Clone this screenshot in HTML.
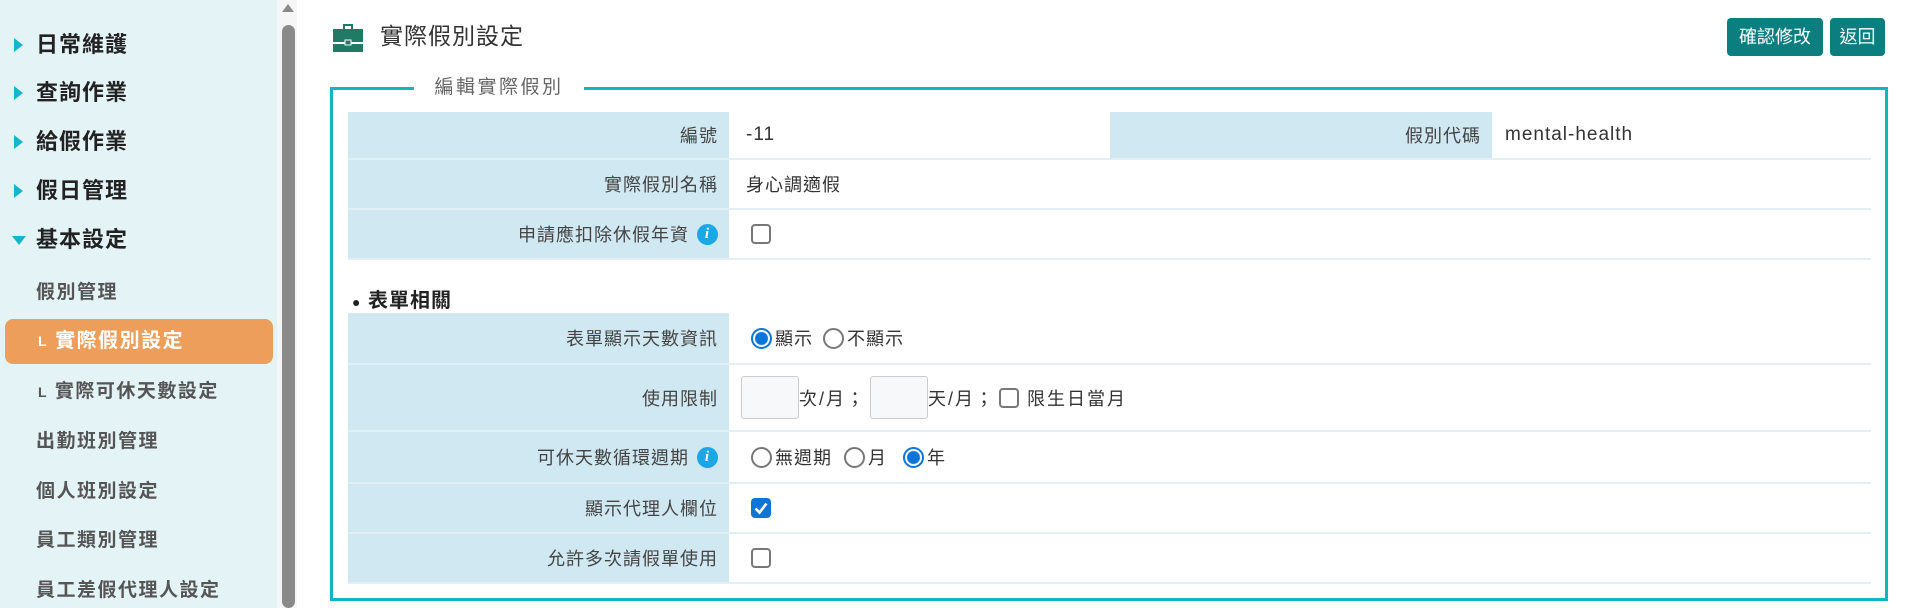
<!DOCTYPE html>
<html><head><meta charset="utf-8"><style>
*{box-sizing:border-box;margin:0;padding:0}
body{width:1910px;height:608px;overflow:hidden;background:#fff;font-family:"Liberation Sans","Noto Sans CJK TC",sans-serif;position:relative;color:#333}
.side{position:absolute;left:0;top:0;width:277px;height:608px;background:#e4f4f6}
.m{position:absolute;left:36px;font-size:22px;font-weight:bold;color:#222;letter-spacing:1px;line-height:24px}
.ar{position:absolute;left:-22px;top:5px;width:0;height:0;border-top:7px solid transparent;border-bottom:7px solid transparent;border-left:9px solid #17b5c9}
.ad{position:absolute;left:-24px;top:8px;border-left:7px solid transparent;border-right:7px solid transparent;border-top:9px solid #17b5c9}
.s{position:absolute;left:36px;font-size:19px;font-weight:bold;color:#555;letter-spacing:1.5px;line-height:22px}
.pill{position:absolute;left:5px;top:319px;width:268px;height:45px;background:#ec9e5a;border-radius:8px}
.track{position:absolute;left:277px;top:0;width:20px;height:608px;background:#f6f6f6}
.thumb{position:absolute;left:282px;top:25px;width:13px;height:583px;background:#8a8a8a;border-radius:7px}
.up{position:absolute;left:282px;top:4px;border-left:6.5px solid transparent;border-right:6.5px solid transparent;border-bottom:8px solid #8a8a8a}
.btn{position:absolute;top:18px;height:38px;background:#0b7f80;color:#fff;font-size:18px;line-height:38px;text-align:center;border-radius:4px}
.fs{position:absolute;left:330px;top:87px;width:1558px;height:514px;border:3px solid #12b5bf}
.lg{position:absolute;left:414px;top:76px;width:170px;height:24px;background:#fff;text-align:center;font-size:19px;color:#666;letter-spacing:2.5px;line-height:24px}
.row{position:absolute;left:348px;width:1523px;border-bottom:2px solid #e3eff4}
.lab{position:absolute;left:0;top:0;bottom:0;width:381px;background:#cfe8f1;text-align:right;padding-right:11px;font-size:18px;color:#444;letter-spacing:1px;display:flex;align-items:center;justify-content:flex-end}
.val{position:absolute;left:395px;top:0;bottom:0;display:flex;align-items:center;font-size:18px;color:#333;letter-spacing:1px}
.cb{display:inline-block;width:20px;height:20px;border:2px solid #777;border-radius:4px;background:#fff;margin-left:8px}
.cbon{display:inline-block;width:20px;height:20px;border-radius:4px;background:#0d74d8;margin-left:8px;position:relative}
.rd{display:inline-block;width:21px;height:21px;border:2px solid #777;border-radius:50%;margin:0 3px 0 8px;background:#fff;vertical-align:middle}
.rdon{display:inline-block;width:21px;height:21px;border:2px solid #0d74d8;border-radius:50%;margin:0 3px 0 8px;background:radial-gradient(circle,#0d74d8 6px,#fff 7px);vertical-align:middle}
.info{display:inline-block;width:21px;height:21px;border-radius:50%;background:#1aa7e6;color:#fff;font-size:15px;font-style:italic;font-weight:bold;line-height:21px;text-align:center;margin-left:8px;font-family:"Liberation Serif",serif}
.inp{display:inline-block;width:58px;height:43px;border:1px solid #ccc;border-radius:3px;background:#f7f8fa}
</style></head><body>
<div class="side"></div>
<div class="m" style="top:33px"><span class="ar"></span>日常維護</div>
<div class="m" style="top:81px"><span class="ar"></span>查詢作業</div>
<div class="m" style="top:130px"><span class="ar"></span>給假作業</div>
<div class="m" style="top:179px"><span class="ar"></span>假日管理</div>
<div class="m" style="top:228px"><span class="ad"></span>基本設定</div>
<div class="s" style="top:282px">假別管理</div>
<div class="pill"></div>
<div class="s" style="top:330px;color:#fff;left:38px;font-size:20px"><span style="font-size:14px;vertical-align:top">L</span> 實際假別設定</div>
<div class="s" style="top:381px;left:38px"><span style="font-size:14px;vertical-align:top">L</span> 實際可休天數設定</div>
<div class="s" style="top:431px">出勤班別管理</div>
<div class="s" style="top:481px">個人班別設定</div>
<div class="s" style="top:530px">員工類別管理</div>
<div class="s" style="top:580px">員工差假代理人設定</div>
<div class="track"></div><div class="thumb"></div><div class="up"></div>

<svg style="position:absolute;left:333px;top:23px" width="30" height="29" viewBox="0 0 30 29"><path d="M10 1h10v5h-2V3h-6v3h-2z" fill="#1f7a66"/><rect x="0" y="6" width="30" height="13" fill="#1f7a66"/><rect x="0" y="21" width="30" height="8" fill="#1f7a66"/><rect x="12" y="17" width="6" height="5" fill="#1f7a66" stroke="#fff" stroke-width="1"/></svg>
<div style="position:absolute;left:380px;top:22px;font-size:23px;color:#333;letter-spacing:1px;line-height:28px">實際假別設定</div>
<div class="btn" style="left:1727px;width:96px">確認修改</div>
<div class="btn" style="left:1830px;width:55px">返回</div>

<div class="fs"></div>
<div class="lg">編輯實際假別</div>

<div class="row" style="top:112px;height:48px">
 <div class="lab">編號</div><div class="val" style="left:398px;font-size:19px">-11</div>
 <div class="lab" style="left:762px;width:382px">假別代碼</div><div class="val" style="left:1157px;font-size:19px">mental-health</div>
</div>
<div class="row" style="top:160px;height:50px"><div class="lab">實際假別名稱</div><div class="val" style="left:398px">身心調適假</div></div>
<div class="row" style="top:210px;height:50px"><div class="lab">申請應扣除休假年資<span class="info">i</span></div><div class="val"><span class="cb"></span></div></div>
<div style="position:absolute;left:352px;top:284px;font-size:20px;font-weight:bold;color:#222;letter-spacing:1px"><span style="font-size:14px">●</span> 表單相關</div>
<div class="row" style="top:313px;height:52px"><div class="lab">表單顯示天數資訊</div><div class="val"><span class="rdon"></span>顯示<span class="rd" style="margin-left:10px"></span>不顯示</div></div>
<div class="row" style="top:365px;height:67px"><div class="lab">使用限制</div><div class="val" style="left:393px;letter-spacing:2px"><span class="inp"></span>次/月；<span class="inp" style="margin-left:4px"></span>天/月；<span class="cb" style="margin-left:4px;margin-right:8px"></span>限生日當月</div></div>
<div class="row" style="top:432px;height:52px"><div class="lab">可休天數循環週期<span class="info">i</span></div><div class="val"><span class="rd"></span>無週期<span class="rd" style="margin-left:12px"></span>月<span class="rdon" style="margin-left:16px"></span>年</div></div>
<div class="row" style="top:484px;height:50px"><div class="lab">顯示代理人欄位</div><div class="val"><span class="cbon"><svg width="20" height="20" viewBox="0 0 20 20" style="position:absolute;left:0;top:0"><path d="M4.5 10.5l4 4 7-9" stroke="#fff" stroke-width="2.6" fill="none"/></svg></span></div></div>
<div class="row" style="top:534px;height:50px"><div class="lab">允許多次請假單使用</div><div class="val"><span class="cb"></span></div></div>
</body></html>
